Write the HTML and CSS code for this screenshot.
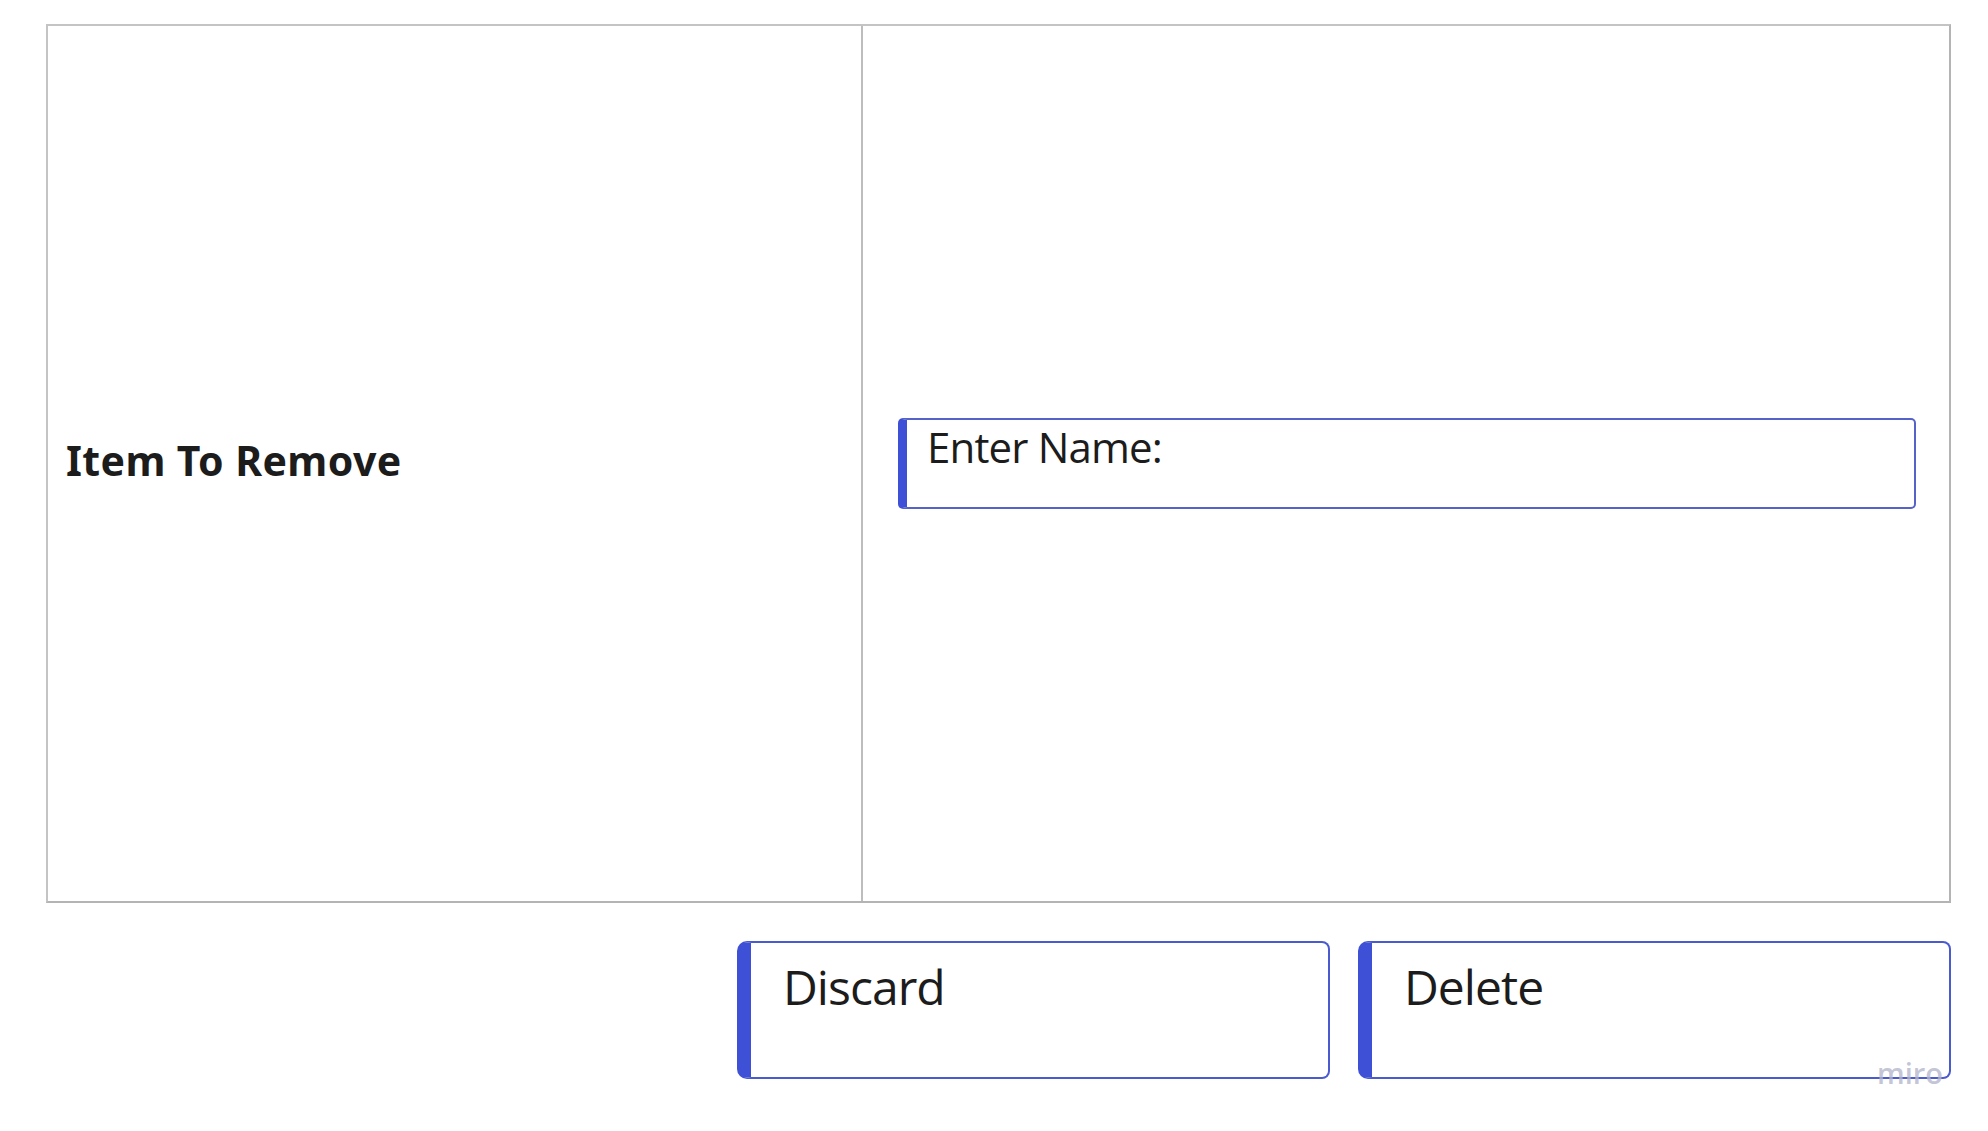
FILE: index.html
```html
<!DOCTYPE html>
<html lang="en">
<head>
<meta charset="utf-8">
<title>Item To Remove</title>
<link rel="stylesheet" href="styles.css">
</head>
<body>
<div class="page">
  <div class="panel">
    <div class="cell cell-label">
      <span class="label">Item To Remove</span>
    </div>
    <div class="cell cell-input">
      <div class="field">Enter Name:</div>
    </div>
  </div>
  <div class="actions">
    <div class="btn">Discard</div>
    <div class="btn">Delete</div>
  </div>
  <div class="watermark">miro</div>
</div>
</body>
</html>
```
FILE: styles.css
```css
html, body {
  margin: 0;
  padding: 0;
  background: #ffffff;
}
body {
  font-family: "Open Sans", "Noto Sans", sans-serif;
  color: #1c1c1c;
}
.page {
  position: relative;
  width: 1988px;
  height: 1131px;
  padding: 24px 0 0 46px;
  box-sizing: border-box;
}
.panel {
  width: 1905px;
  height: 879px;
  box-sizing: border-box;
  border: 2px solid #c4c4c4;
  border-right-color: #b4b4b4;
  border-bottom-color: #b4b4b4;
  display: grid;
  grid-template-columns: 815px 1fr;
}
.cell {
  display: flex;
  align-items: center;
}
.cell-label {
  border-right: 2px solid #bdbdbd;
  padding: 0 0 8px 18px;
}
.label {
  font-family: "Noto Sans", "Open Sans", sans-serif;
  font-size: 41px;
  font-weight: 700;
  letter-spacing: 0.4px;
  color: #1c1c1c;
}
.cell-input {
  padding: 0 33px 0 35px;
}
.field {
  flex: 1;
  height: 91px;
  box-sizing: border-box;
  border: 2px solid #5563c8;
  border-left: 9px solid #3e50d6;
  border-radius: 5px;
  padding: 2px 0 0 20px;
  font-size: 42px;
  line-height: 1.2;
  letter-spacing: -0.02em;
  color: #1c1c1c;
}
.actions {
  width: 1905px;
  margin-top: 38px;
  box-sizing: border-box;
  display: flex;
  justify-content: flex-end;
  gap: 28px;
}
.btn {
  width: 593px;
  height: 138px;
  box-sizing: border-box;
  border: 2px solid #4a5acf;
  border-left: 14px solid #3e50d6;
  border-radius: 10px 8px 8px 10px;
  padding: 15px 0 0 32px;
  font-size: 48px;
  line-height: 1.2;
  letter-spacing: -0.02em;
  color: #1c1c1c;
}
.watermark {
  position: absolute;
  left: 1877px;
  top: 1058px;
  font-size: 29px;
  line-height: 1;
  font-weight: 600;
  color: rgba(180, 183, 204, 0.8);
}
```
